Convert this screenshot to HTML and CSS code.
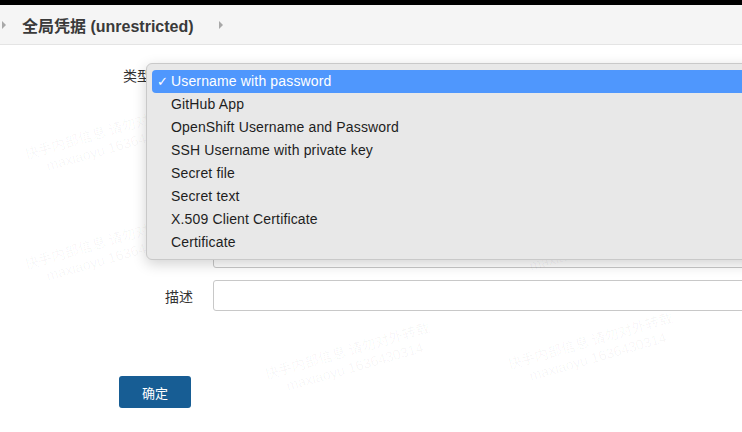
FILE: index.html
```html
<!DOCTYPE html>
<html lang="zh">
<head>
<meta charset="utf-8">
<title>全局凭据</title>
<link rel="stylesheet" href="styles.css">
</head>
<body>
<div class="topbar"></div>
<div class="breadcrumb">
  <span class="crumb-arrow"></span>
  <span class="crumb-title">全局凭据 (unrestricted)</span>
  <span class="crumb-arrow second"></span>
</div>
<div class="page">
  <form class="form">
    <div class="row row-type">
      <label class="label label-type">类型</label>
      <div class="field select-field"></div>
    </div>
    <div class="row row-hidden">
      <label class="label"></label>
      <div class="field input-field"></div>
    </div>
    <div class="row row-desc">
      <label class="label">描述</label>
      <div class="field input-field"></div>
    </div>
    <div class="row row-submit">
      <button type="button" class="btn">确定</button>
    </div>
  </form>

  <div class="watermarks">
    <div class="wm wm1"><span>快手内部信息 请勿对外转载</span><span class="wm-sub">maxiaoyu 1636430314</span></div>
    <div class="wm wm2"><span>快手内部信息 请勿对外转载</span><span class="wm-sub">maxiaoyu 1636430314</span></div>
    <div class="wm wm3"><span>快手内部信息 请勿对外转载</span><span class="wm-sub">maxiaoyu 1636430314</span></div>
    <div class="wm wm4"><span>快手内部信息 请勿对外转载</span><span class="wm-sub">maxiaoyu 1636430314</span></div>
    <div class="wm wm6"><span>快手内部信息 请勿对外转载</span><span class="wm-sub">maxiaoyu 1636430314</span></div>
  </div>

  <ul class="menu">
    <li class="item selected"><span class="check">✓</span>Username with password</li>
    <li class="item">GitHub App</li>
    <li class="item">OpenShift Username and Password</li>
    <li class="item">SSH Username with private key</li>
    <li class="item">Secret file</li>
    <li class="item">Secret text</li>
    <li class="item">X.509 Client Certificate</li>
    <li class="item">Certificate</li>
  </ul>
</div>
</body>
</html>
```

FILE: styles.css
```css
html, body {
  margin: 0;
  padding: 0;
  background: #ffffff;
  font-family: "Liberation Sans", "Noto Sans CJK SC", sans-serif;
  color: #333333;
  overflow: hidden;
  width: 742px;
  height: 432px;
}

.topbar {
  height: 5px;
  background: #000000;
}

.breadcrumb {
  height: 39px;
  background: #f5f5f5;
  border-bottom: 1px solid #e4e4e4;
  display: flex;
  align-items: center;
  padding-left: 2px;
}

.crumb-arrow {
  width: 0;
  height: 0;
  border-top: 4px solid transparent;
  border-bottom: 4px solid transparent;
  border-left: 4px solid #a8a8a8;
}

.crumb-arrow.second {
  margin-left: 25px;
}

.crumb-title {
  margin-left: 16px;
  font-size: 16px;
  font-weight: bold;
  color: #3a3a3a;
  font-family: "Liberation Sans", "Noto Sans CJK SC", sans-serif;
}

.page {
  position: relative;
  height: 387px;
}

.form {
  display: flex;
  flex-direction: column;
  padding-top: 18px;
}

.row {
  display: flex;
  align-items: center;
}

.label {
  width: 213px;
  flex: none;
  text-align: right;
  font-size: 14px;
  color: #333333;
  font-family: "Noto Sans CJK SC", sans-serif;
  padding-right: 20px;
  box-sizing: border-box;
}

.label-type {
  padding-right: 62px;
}

.field {
  flex: 1;
  box-sizing: border-box;
  border: 1px solid #c8c8c8;
  border-radius: 3px;
  background: #ffffff;
  margin-right: -10px;
}

.select-field {
  height: 24px;
}

.input-field {
  height: 31px;
}

.row-hidden {
  margin-top: 150px;
}

.row-desc {
  margin-top: 12px;
}

.row-submit {
  margin-top: 65px;
  padding-left: 119px;
}

.btn {
  width: 72px;
  height: 32px;
  background: #175d94;
  border: none;
  border-radius: 3px;
  color: #ffffff;
  font-size: 13px;
  font-family: "Noto Sans CJK SC", sans-serif;
  padding: 0;
}

.menu {
  position: absolute;
  left: 146px;
  top: 18px;
  right: -20px;
  margin: 0;
  padding: 6px 0 5px 5px;
  list-style: none;
  background: #e8e8e8;
  border: 1px solid #c9c9c9;
  border-radius: 6px;
  box-shadow: 0 4px 14px rgba(0, 0, 0, 0.18);
}

.item {
  height: 23px;
  line-height: 23px;
  padding-left: 19px;
  font-size: 14px;
  letter-spacing: 0.15px;
  color: #1e1e1e;
  position: relative;
  border-radius: 4px;
}

.item.selected {
  background: #4f97fd;
  color: #ffffff;
}

.check {
  position: absolute;
  left: 5px;
  top: 0;
  font-size: 13px;
  font-family: "DejaVu Sans", sans-serif;
}

.watermarks {
  position: absolute;
  inset: 0;
  pointer-events: none;
  overflow: hidden;
}

.wm {
  position: absolute;
  display: flex;
  flex-direction: column;
  font-size: 14px;
  font-family: "Noto Sans CJK SC", sans-serif;
  color: rgba(0, 0, 0, 0.04);
  transform: rotate(-16deg);
  transform-origin: left top;
  white-space: nowrap;
  line-height: 18px;
}

.wm-sub {
  padding-left: 18px;
  font-family: "Liberation Sans", sans-serif;
}

.wm1 { left: 22px; top: 100px; }
.wm2 { left: 22px; top: 210px; }
.wm3 { left: 262px; top: 320px; }
.wm4 { left: 505px; top: 310px; }
.wm6 { left: 505px; top: 200px; }
```
